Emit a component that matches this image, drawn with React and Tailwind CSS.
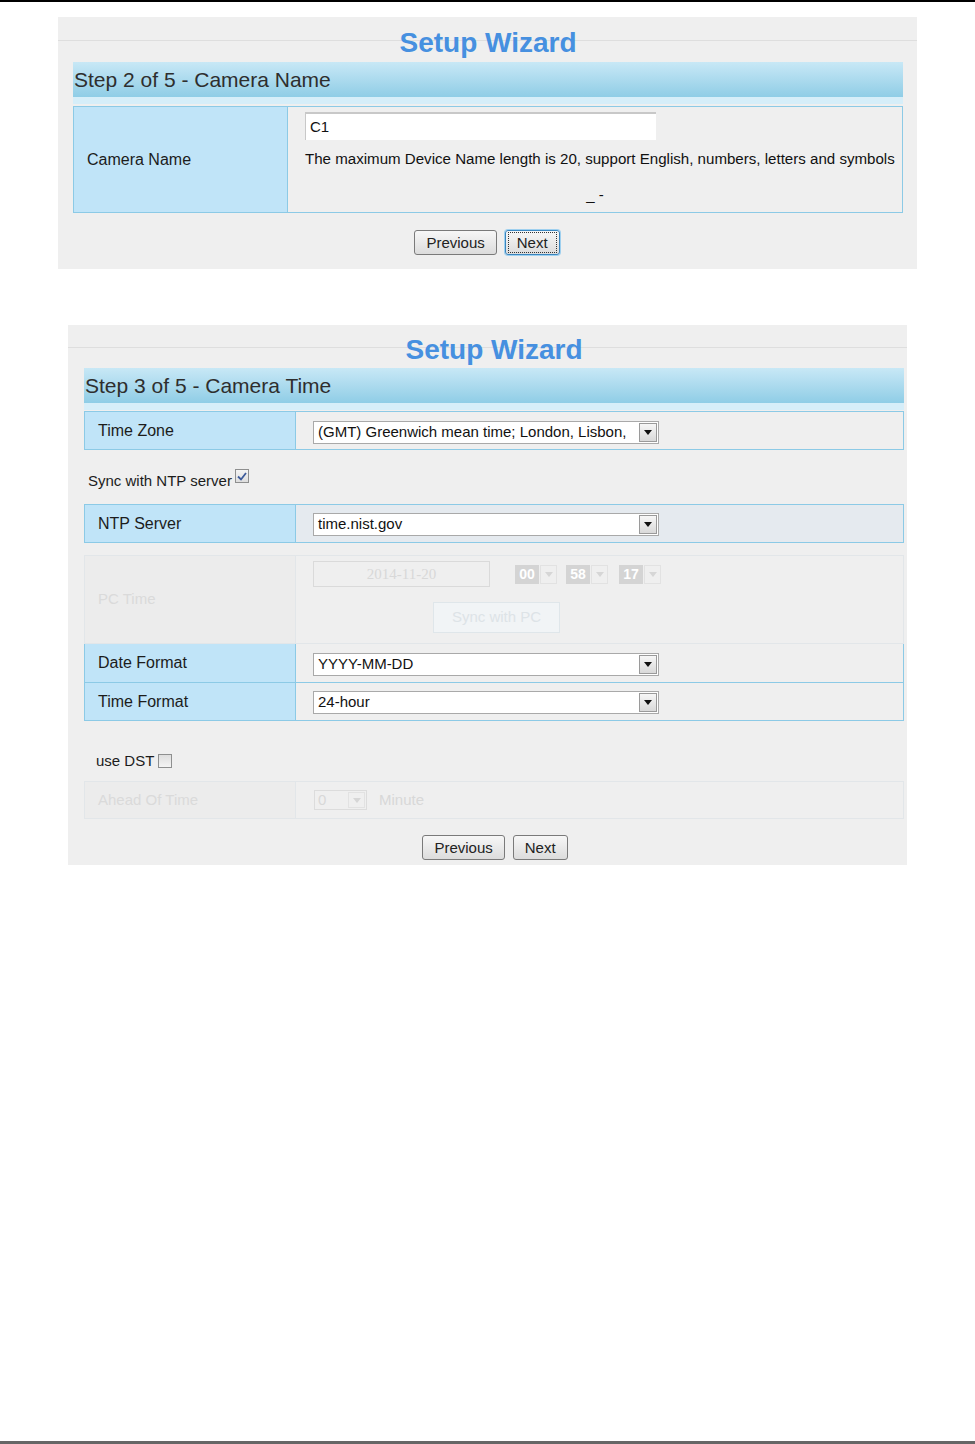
import React from "react";

const font = { fontFamily: '"Liberation Sans", Arial, sans-serif' };

const Arrow = ({ faded }) => (
  <svg width="8" height="5" viewBox="0 0 8 5">
    <path d="M0 0 L8 0 L4 5 Z" fill={faded ? "#d6d6d6" : "#111"} />
  </svg>
);

const Select = ({ value, className }) => (
  <div className={`flex items-stretch border border-[#a9a9a9] bg-white ${className}`}>
    <div className="flex flex-1 items-center overflow-hidden whitespace-nowrap pl-[4px] text-[15px] text-[#111]">
      {value}
    </div>
    <div className="my-[1px] mr-[1px] flex w-[18px] items-center justify-center border border-[#9a9a9a] bg-gradient-to-b from-[#f7f7f7] to-[#d9d9d9]">
      <Arrow />
    </div>
  </div>
);

const Button = ({ children, focused }) => (
  <button
    className={`flex h-[25px] items-center rounded-[3px] border bg-gradient-to-b from-[#f7f7f7] to-[#dcdcdc] px-[2px] text-[15px] text-[#222] ${
      focused ? "border-[#3a86c0] shadow-[0_0_0_1px_#9fd0ef]" : "border-[#7a7a7a]"
    }`}
  >
    <span
      className={`px-[8px] leading-[19px] ${focused ? "border border-dotted border-[#333]" : "border border-transparent"}`}
    >
      {children}
    </span>
  </button>
);

const StepBar = ({ children }) => (
  <>
    <div className="flex h-[35px] items-center bg-gradient-to-b from-[#c8e8f6] to-[#8fcde6] pl-[1px] text-[21px] text-[#2e2e2e]">
      {children}
    </div>
    <div className="h-[7px] bg-[#d6eef9]" />
  </>
);

const Row = ({ label, children, top = true, h = "h-[39px]", rightBg = "bg-[#efefef]" }) => (
  <div className={`flex ${h} border-x border-b border-[#8ccae6] ${top ? "border-t" : ""}`}>
    <div className="flex w-[211px] items-center border-r border-[#8ccae6] bg-[#c0e4f8] pl-[13px] text-[16px] text-[#1c1c1c]">
      {label}
    </div>
    <div className={`flex flex-1 items-center pl-[17px] ${rightBg}`}>{children}</div>
  </div>
);

const TimeBox = ({ v }) => (
  <div className="flex items-center">
    <div className="flex h-[19px] w-[24px] items-center justify-center bg-[#d4d4d4] text-[14px] font-bold text-white">
      {v}
    </div>
    <div className="ml-[1px] flex h-[19px] w-[17px] items-center justify-center border border-[#e2e2e2]">
      <Arrow faded />
    </div>
  </div>
);

export default function App() {
  return (
    <div className="flex h-[1444px] w-[975px] flex-col bg-white" style={font}>
      <div className="h-[2px] bg-black" />

      {/* Step 2 */}
      <div className="ml-[58px] mt-[15px] flex h-[252px] w-[859px] flex-col bg-[#efefef]">
        <div className="relative">
          <div className="absolute left-0 right-0 top-[23px] border-t border-[#dedede]" />
        </div>
        <div className="ml-[15px] mr-[14px]">
          <div className="relative h-[45px] pt-[10px] text-center text-[28px] font-bold leading-[32px] text-[#4690e0]">
            Setup Wizard
          </div>
          <StepBar>Step 2 of 5 - Camera Name</StepBar>
          <div className="mt-[2px] flex h-[107px] border border-[#8ccae6]">
            <div className="flex w-[214px] items-center border-r border-[#8ccae6] bg-[#c0e4f8] pl-[13px] text-[16px] text-[#1c1c1c]">
              Camera Name
            </div>
            <div className="flex flex-1 flex-col pl-[17px] pt-[5px]">
              <div className="flex h-[28px] w-[351px] items-center border-t-2 border-l border-[#c8c8c8] bg-white pl-[4px] text-[15px] text-[#111]">
                C1
              </div>
              <div className="mt-[10px] whitespace-nowrap text-[15.1px] leading-[18px] text-[#111]">
                The maximum Device Name length is 20, support English, numbers, letters and symbols
              </div>
              <div className="mt-[18px] pr-[17px] text-center text-[15px] leading-[18px] text-[#111]">_ -</div>
            </div>
          </div>
          <div className="mt-[17px] flex justify-center gap-[8px] pr-[2px]">
            <Button>Previous</Button>
            <Button focused>Next</Button>
          </div>
        </div>
      </div>

      {/* Step 3 */}
      <div className="ml-[68px] mt-[56px] h-[540px] w-[839px] bg-[#efefef]">
        <div className="relative">
          <div className="absolute left-0 right-0 top-[22px] border-t border-[#dedede]" />
        </div>
        <div className="ml-[16px] mr-[3px]">
          <div className="relative h-[43px] pt-[9px] text-center text-[28px] font-bold leading-[32px] text-[#4690e0]">
            Setup Wizard
          </div>
          <StepBar>Step 3 of 5 - Camera Time</StepBar>
          <div className="h-[1px]" />
          <Row label="Time Zone">
            <Select value="(GMT) Greenwich mean time; London, Lisbon," className="mt-[3px] h-[23px] w-[346px]" />
          </Row>

          <div className="flex h-[54px] items-start pl-[4px] pt-[22px] text-[15px] leading-[18px] text-[#1c1c1c]">
            <span>Sync with NTP server</span>
            <div className="-mt-[3px] ml-[3px] flex h-[14px] w-[14px] items-center justify-center border border-[#8e8f8f] bg-gradient-to-b from-[#f4f4f4] to-[#dedede]">
              <svg width="10" height="9" viewBox="0 0 10 9">
                <path d="M1 4.5 L4 7.5 L9 1" fill="none" stroke="#3c5a9a" strokeWidth="1.8" />
              </svg>
            </div>
          </div>

          <Row label="NTP Server" rightBg="bg-[#e5eaef]">
            <Select value="time.nist.gov" className="mt-[2px] h-[23px] w-[346px]" />
          </Row>

          <div className="h-[12px]" />

          {/* PC Time (disabled) */}
          <div className="flex h-[89px] border border-[#e2e6e9]">
            <div className="flex w-[211px] items-center border-r border-[#e2e6e9] bg-[#ececec] pl-[13px] text-[15px] text-[#dadada]">
              PC Time
            </div>
            <div className="flex flex-1 flex-col pl-[17px] pt-[5px]">
              <div className="flex items-center">
                <div className="flex h-[26px] w-[177px] items-center justify-center border border-[#dadada] text-[15px] text-[#d8d8d8]" style={{ fontFamily: '"Liberation Serif", serif' }}>
                  2014-11-20
                </div>
                <div className="ml-[25px]">
                  <TimeBox v="00" />
                </div>
                <div className="ml-[9px]">
                  <TimeBox v="58" />
                </div>
                <div className="ml-[11px]">
                  <TimeBox v="17" />
                </div>
              </div>
              <div className="ml-[120px] mt-[15px] flex h-[31px] w-[127px] items-center justify-center border border-[#dfe6ea] bg-[#f1f4f6] text-[15px] text-[#dde3e7]">
                Sync with PC
              </div>
            </div>
          </div>

          <Row label="Date Format" top={false} h="h-[39px]">
            <Select value="YYYY-MM-DD" className="mt-[2px] h-[23px] w-[346px]" />
          </Row>
          <Row label="Time Format" top={false} h="h-[38px]">
            <Select value="24-hour" className="mt-[2px] h-[23px] w-[346px]" />
          </Row>

          <div className="flex h-[60px] items-start pl-[12px] pt-[31px] text-[15px] leading-[18px] text-[#1c1c1c]">
            <span>use DST</span>
            <div className="ml-[4px] mt-[2px] h-[14px] w-[14px] border border-[#8e8f8f] bg-gradient-to-b from-[#dedede] to-[#f4f4f4]" />
          </div>

          {/* Ahead Of Time (disabled) */}
          <div className="flex h-[38px] border border-[#e2e6e9]">
            <div className="flex w-[211px] items-center border-r border-[#e2e6e9] bg-[#ececec] pl-[13px] text-[15px] text-[#dadada]">
              Ahead Of Time
            </div>
            <div className="flex flex-1 items-center pl-[18px] text-[15px] text-[#d8d8d8]">
              <div className="flex h-[20px] w-[53px] items-stretch border border-[#dcdcdc]">
                <span className="flex flex-1 items-center pl-[3px]">0</span>
                <div className="m-[1px] flex w-[17px] items-center justify-center border border-[#e2e2e2]">
                  <Arrow faded />
                </div>
              </div>
              <span className="ml-[12px]">Minute</span>
            </div>
          </div>

          <div className="mt-[16px] flex justify-center gap-[8px] pl-[2px]">
            <Button>Previous</Button>
            <Button>Next</Button>
          </div>
        </div>
      </div>

      <div className="flex-1" />
      <div className="h-[3px] bg-[#666]" />
    </div>
  );
}
